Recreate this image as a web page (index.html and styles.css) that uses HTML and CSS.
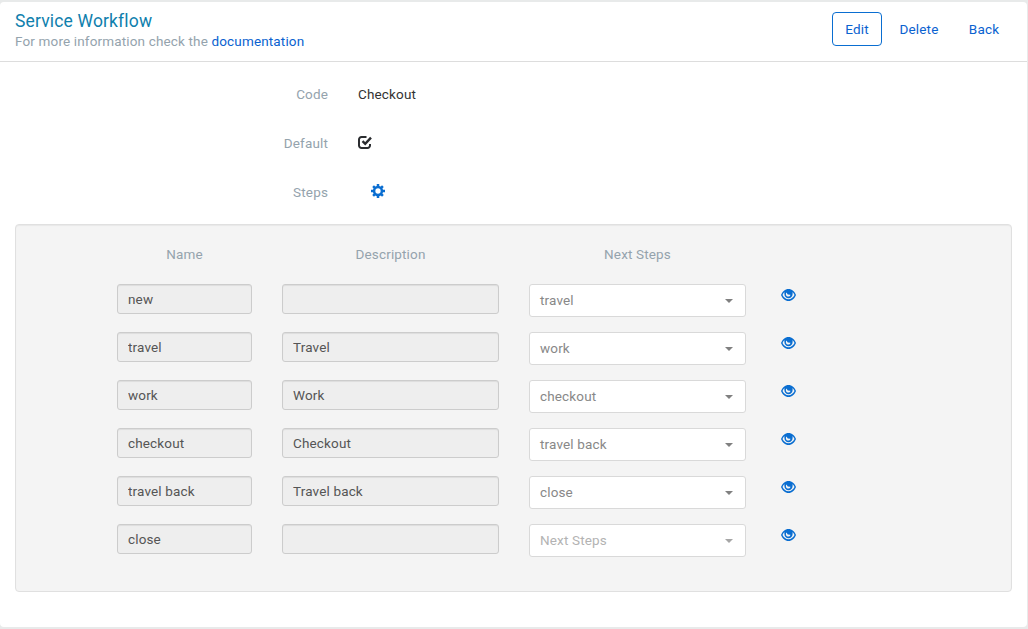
FILE: index.html
```html
<!DOCTYPE html>
<html lang="en">

<head>
    <meta charset="UTF-8">
    <meta name="viewport" content="width=device-width, initial-scale=1.0">
    <title>Service Workflow</title>
    <link rel="stylesheet" href="styles.css">
</head>

<body>
    <!-- shared icon -->
    <svg class="sprite" width="0" height="0">
        <symbol id="eye" viewBox="0 0 15 12">
            <path fill-rule="evenodd" d="M7.500 0C4 0 1.500 2.500 0 6c1.500 3.500 4 6 7.500 6s6-2.500 7.500-6C13.500 2.500 11 0 7.500 0zM3.600 2.900A4.200 4.200 0 0 0 3.400 5c0 2.300 1.800 4.300 4.100 4.300s4.100-2 4.100-4.300a4.200 4.200 0 0 0-.2-2.100C12.300 3.600 13 4.700 13.500 6c-1.300 2.500-3.400 4.300-6 4.300S2.800 8.500 1.500 6C2 4.700 2.700 3.600 3.600 2.900zM5.400 3.500C5 4 4.900 4.600 4.900 5.200c0 1.500 1.100 2.300 2.400 2.300s2.100-.8 2.100-1.800L6.800 5.600z" />
        </symbol>
    </svg>

    <div class="card">
        <div class="card-header">
            <div class="heading">
                <h1>Service Workflow</h1>
                <p>For more information check the <a href="#">documentation</a></p>
            </div>
            <div class="actions">
                <a href="#" class="btn btn-outline">Edit</a>
                <a href="#" class="btn btn-delete">Delete</a>
                <a href="#" class="btn btn-back">Back</a>
            </div>
        </div>

        <div class="details">
            <div class="detail-row">
                <div class="detail-label">Code</div>
                <div class="detail-value">Checkout</div>
            </div>
            <div class="detail-row">
                <div class="detail-label">Default</div>
                <div class="detail-value">
                    <svg class="icon-check" width="15" height="13" viewBox="0 0 15 13">
                        <path d="M8.500 1H3.500A2.500 2.500 0 0 0 1 3.500v6A2.500 2.500 0 0 0 3.500 12h6A2.500 2.500 0 0 0 12 9.500V8" />
                        <path class="tick" d="M4.500 5.200l2.700 2.600L13 1.600" />
                    </svg>
                </div>
            </div>
            <div class="detail-row">
                <div class="detail-label">Steps</div>
                <div class="detail-value">
                    <svg class="icon-cog" width="14" height="14" viewBox="0 0 14 14">
                        <circle cx="7" cy="7" r="3.900" />
                        <path d="M7 0v3M7 11v3M0 7h3M11 7h3M2.100 2.100l2 2M9.900 9.900l2 2M2.100 11.900l2-2M9.900 4.100l2-2" />
                    </svg>
                </div>
            </div>
        </div>

        <div class="well">
            <div class="step-row step-head">
                <div>Name</div>
                <div>Description</div>
                <div>Next Steps</div>
            </div>
            <div class="step-row">
                <input type="text" value="new" disabled>
                <input type="text" value="" disabled>
                <div class="select">travel<span class="caret"></span></div>
                <svg class="icon-eye"><use href="#eye" /></svg>
            </div>
            <div class="step-row">
                <input type="text" value="travel" disabled>
                <input type="text" value="Travel" disabled>
                <div class="select">work<span class="caret"></span></div>
                <svg class="icon-eye"><use href="#eye" /></svg>
            </div>
            <div class="step-row">
                <input type="text" value="work" disabled>
                <input type="text" value="Work" disabled>
                <div class="select">checkout<span class="caret"></span></div>
                <svg class="icon-eye"><use href="#eye" /></svg>
            </div>
            <div class="step-row">
                <input type="text" value="checkout" disabled>
                <input type="text" value="Checkout" disabled>
                <div class="select">travel back<span class="caret"></span></div>
                <svg class="icon-eye"><use href="#eye" /></svg>
            </div>
            <div class="step-row">
                <input type="text" value="travel back" disabled>
                <input type="text" value="Travel back" disabled>
                <div class="select">close<span class="caret"></span></div>
                <svg class="icon-eye"><use href="#eye" /></svg>
            </div>
            <div class="step-row">
                <input type="text" value="close" disabled>
                <input type="text" value="" disabled>
                <div class="select placeholder">Next Steps<span class="caret"></span></div>
                <svg class="icon-eye"><use href="#eye" /></svg>
            </div>
        </div>
    </div>
</body>

</html>
```

FILE: styles.css
```css
* {
    box-sizing: border-box;
}

body {
    margin: 0;
    padding: 2px 1px 2px 0;
    height: 629px;
    overflow: hidden;
    background-color: #e8eaea;
    font-family: Roboto, Arial, sans-serif;
    font-size: 13.5px;
    letter-spacing: 0.15px;
    line-height: 20px;
    color: #333;
}

.sprite {
    position: absolute;
}

a {
    color: #0a62d0;
    text-decoration: none;
}

.card {
    height: 625px;
    background-color: white;
    border-radius: 4px;
}

.card-header {
    display: flex;
    justify-content: space-between;
    height: 60px;
    padding: 9px 15px 0;
    border-bottom: 1px solid #ddd;
}

h1 {
    margin: 0;
    font-size: 17.5px;
    font-weight: normal;
    line-height: 20px;
    letter-spacing: 0.15px;
    color: #0f80ad;
}

.heading p {
    margin: 0;
    color: #94a3ad;
}

.actions {
    display: flex;
    padding-top: 1px;
}

.btn {
    height: 34px;
    border: 1px solid transparent;
    border-radius: 4px;
    line-height: 33px;
    text-align: center;
}

.btn-outline {
    width: 50px;
    border-color: #0a6ed1;
}

.btn-delete {
    width: 74px;
}

.btn-back {
    width: 56px;
}

.details {
    padding-top: 22px;
}

.detail-row {
    display: flex;
    gap: 30px;
    height: 49px;
}

.detail-label {
    width: 328px;
    text-align: right;
    color: #94a3ad;
}

.icon-check {
    display: block;
    margin-top: 3px;
    fill: none;
    stroke: #2b2d30;
    stroke-width: 2;
}

.icon-check .tick {
    stroke-width: 2.4;
}

.icon-cog {
    display: block;
    margin: 2px 0 0 13px;
    fill: none;
    stroke: #0a6ed1;
    stroke-width: 2.5;
}

.well {
    height: 368px;
    margin: -7px 15px 0;
    padding: 19px 0 0 101px;
    background-color: #f4f4f4;
    border: 1px solid #e0e0e0;
    border-radius: 4px;
    box-shadow: inset 0 1px 1px rgba(0, 0, 0, 0.05);
}

.step-row {
    display: grid;
    grid-template-columns: 135px 217px 217px 15px;
    column-gap: 30px;
    align-items: start;
    height: 48px;
}

.step-head {
    height: 40px;
    text-align: center;
    color: #94a3ad;
}

input {
    width: 100%;
    height: 30px;
    padding: 0 10px;
    background-color: #eee;
    border: 1px solid #ccc;
    border-radius: 3px;
    box-shadow: inset 0 1px 1px rgba(0, 0, 0, 0.075);
    font: inherit;
    letter-spacing: inherit;
    color: #555;
}

.select {
    display: flex;
    align-items: center;
    justify-content: space-between;
    height: 33px;
    padding: 0 12px 2px 10px;
    background-color: white;
    border: 1px solid #d9d9d9;
    border-radius: 3px;
    color: #888;
}

.caret {
    margin-top: 2px;
    border-top: 4px solid #808080;
    border-left: 4px solid transparent;
    border-right: 4px solid transparent;
}

.placeholder {
    color: #b3b3b3;
}

.placeholder .caret {
    border-top-color: #a6a6a6;
}

.icon-eye {
    width: 15px;
    height: 12px;
    margin: 5px 0 0 5px;
    fill: #0a6ed1;
}
```
